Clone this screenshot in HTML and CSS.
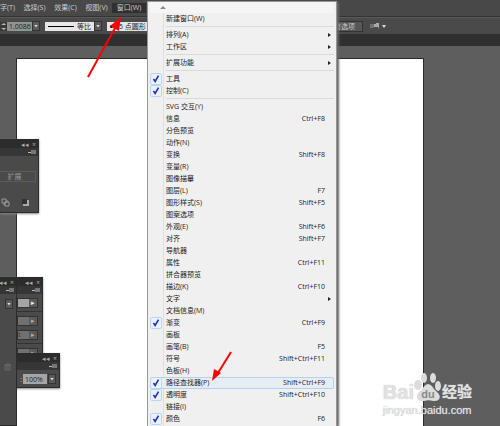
FILE: index.html
```html
<!DOCTYPE html>
<html lang="zh-CN">
<head>
  <meta charset="UTF-8">
  <title>窗口菜单</title>
  <link rel="stylesheet" href="styles.css">
</head>
<body>

  <!-- Menu bar -->
  <nav class="menu-bar">
    <button>字(T)</button>
    <button>选择(S)</button>
    <button>效果(C)</button>
    <button>视图(V)</button>
    <button class="open">窗口(W)</button>
  </nav>

  <!-- Control bar -->
  <div class="control-bar">
    <svg class="stepper" viewBox="0 0 7 9"><path d="M1 3h5l-2-2zM1 6h5l-2 2z" fill="#bbb"/></svg>
    <input class="stroke-width" type="text" value="1.0086" aria-label="描边粗细">
    <button class="drop" aria-label="粗细选项"></button>
    <button class="profile"><span class="line"></span>等比</button>
    <button class="drop" aria-label="等比选项"></button>
    <button class="brush"><span class="dot"></span>5 点圆形</button>
    <button class="prefs">首选项</button>
    <svg class="target-icon" viewBox="0 0 16 8">
      <path d="M0 3h4M0 5h4" stroke="#999"/>
      <path d="M4 2h2v3h-2zM6 1h3v6l-1-2h-2z" fill="#aaa"/>
      <path d="M12 3h4l-2 3z" fill="#ddd"/>
    </svg>
  </div>
  <div class="tab-strip"></div>

  <!-- Canvas with floating panels -->
  <main class="workspace">
    <div class="artboard"></div>

    <section class="panel pathfinder">
      <div class="panel-title"><span>◂◂</span><span>×</span></div>
      <div class="panel-tabs"><i class="panel-menu"></i></div>
      <button class="expand" disabled>扩展</button>
      <div class="shape-modes">
        <svg viewBox="0 0 9 9"><path d="M1 1h4v4h-4zM4 4h4v4h-4zM3 5v2h1M5 3h2v1" fill="none" stroke="#999"/></svg>
        <svg viewBox="0 0 9 9"><path d="M1 1h5v5h-5z" fill="#333"/><path d="M6 2h2v6h-6v-2h4z" fill="#aaa"/></svg>
      </div>
    </section>

    <section class="panel gradient">
      <div class="panel-title"><span>◂◂</span><span>×</span></div>
      <div class="panel-tabs"><i class="panel-menu"></i></div>
      <div class="field bright"><span></span><button aria-label="类型">▸</button></div>
      <hr>
      <div class="field"><span></span><button aria-label="角度">▸</button></div>
      <div class="field"><span>t</span><button aria-label="粗细">▸</button></div>
      <hr>
      <div class="field"><span></span><button aria-label="位置">▸</button></div>
    </section>

    <section class="panel opacity">
      <div class="panel-title"><span>◂◂</span><span>×</span></div>
      <div class="panel-tabs"><i class="panel-menu"></i></div>
      <div class="opacity-row">
        <label for="opacity">:</label>
        <input id="opacity" type="text" value="100%">
        <button class="drop" aria-label="不透明度选项"></button>
      </div>
    </section>

    <section class="panel swatches">
      <div class="panel-title"><span>◂◂</span><span>×</span></div>
      <div class="panel-tabs"><i class="panel-menu"></i></div>
      <div class="swatch-row"><button class="drop" aria-label="色板类型"></button></div>
      <svg class="trash" viewBox="0 0 7 8"><path d="M1 2h5v5h-5zM0 2h7M2 1h3M3 3v3M4 3v3" fill="none" stroke="#696969"/></svg>
    </section>
  </main>

  <!-- Window menu -->
  <div class="window-menu" id="window-menu"></div>

  <!-- Arrows -->
  <svg class="arrow arrow-top" viewBox="0 0 40 64">
    <path d="M2 62L29 13" stroke="#f00" stroke-width="2"/>
    <path d="M35 2L24 11L33 16Z" fill="#f00"/>
  </svg>
  <svg class="arrow arrow-item" viewBox="0 0 24 34">
    <path d="M21 2L8 23" stroke="#f00" stroke-width="2"/>
    <path d="M2 31L4 19L11 23Z" fill="#f00"/>
  </svg>

  <!-- Watermark -->
  <div class="watermark">
    <div class="brand">
      <span>Bai</span>
      <svg viewBox="0 0 28 30">
        <ellipse cx="4" cy="12" rx="4" ry="5"/>
        <ellipse cx="10" cy="5" rx="3" ry="5"/>
        <ellipse cx="19" cy="5" rx="3" ry="5"/>
        <ellipse cx="24" cy="13" rx="3" ry="5"/>
        <path d="M14 11C9 12 9 17 5 19C0 24 4 29 10 28C13 27 16 27 19 28C26 29 28 23 23 19C19 16 19 12 14 11Z"/>
        <text x="14" y="25">du</text>
      </svg>
      <span class="jingyan">经验</span>
    </div>
    <div class="site">jingyan.baidu.com</div>
  </div>

  <script src="menu.js"></script>
</body>
</html>
```
FILE: styles.css
```css
* {
  box-sizing: border-box;
}

body {
  margin: 0;
  height: 100vh;
  display: flex;
  flex-direction: column;
  position: relative;
  overflow: hidden;
  background-color: #5e5e5e;
  color: #ccc;
  font-family: "Open Sans", "Noto Sans CJK SC", sans-serif;
  font-size: 7px;
}

button, input {
  margin: 0;
  padding: 0;
  border: none;
  border-radius: 0;
  background: none;
  color: inherit;
  font: inherit;
}

/* Menu bar */
.menu-bar {
  flex: none;
  display: flex;
  height: 17px;
  padding: 3px 0;
  background-color: #484848;
  border-bottom: 1px solid #333;
}

.menu-bar button {
  width: 31px;
  line-height: 10px;
  white-space: nowrap;
}

.menu-bar button:first-child {
  width: 19px;
  padding-right: 5px;
  text-align: right;
}

.menu-bar .open {
  width: 34px;
  background-color: #303030;
}

/* Control bar */
.control-bar {
  flex: none;
  display: flex;
  align-items: center;
  height: 17px;
  background-color: #4a4a4a;
  border-top: 1px solid #5a5a5a;
}

.stepper {
  width: 7px;
  height: 9px;
  background-color: #3a3a3a;
}

.stroke-width {
  width: 25px;
  height: 9px;
  background-color: #929292;
  color: #222;
  padding-left: 2px;
}

.drop {
  display: flex;
  align-items: center;
  justify-content: center;
  width: 8px;
  height: 10px;
  border: 1px solid #333;
  background-color: #5a5a5a;
}

.drop::after {
  content: "";
  width: 4px;
  height: 3px;
  background-color: #ddd;
  clip-path: polygon(0 0, 100% 0, 50% 100%);
}

.profile, .brush {
  display: flex;
  align-items: center;
  gap: 3px;
  height: 9px;
  padding: 0 3px;
  background-color: #e6e6e6;
  color: #222;
}

.profile {
  width: 49px;
  margin-left: 5px;
}

.line {
  flex: 1;
  height: 1px;
  background-color: #000;
}

.brush {
  width: 54px;
  margin-left: 5px;
  gap: 6px;
}

.dot {
  width: 3px;
  height: 3px;
  border-radius: 50%;
  background-color: #000;
}

.prefs {
  width: 36px;
  height: 11px;
  margin-left: 166px;
  padding-right: 7px;
  line-height: 9px;
  text-align: right;
  border: 1px solid #333;
  background-color: #575757;
}

.target-icon {
  width: 16px;
  height: 8px;
  margin-left: 7px;
}

.tab-strip {
  flex: none;
  height: 12px;
  background-color: #303030;
}

/* Canvas */
.workspace {
  flex: 1;
  position: relative;
  display: flex;
  padding: 12px 76px 0 16px;
}

.artboard {
  flex: 1;
  background-color: #fff;
  border: 1px solid #2b2b2b;
  border-bottom: none;
}

/* Floating panels */
.panel {
  position: absolute;
  left: 0;
  background-color: #4a4a4a;
  border: 1px solid #2b2b2b;
  border-left: none;
  box-shadow: 0 1px 2px #888;
}

.panel-title, .panel-tabs {
  display: flex;
  justify-content: flex-end;
  align-items: center;
  gap: 3px;
  height: 8px;
  padding-right: 2px;
  background-color: #2c2c2c;
  color: #aaa;
}

.panel-tabs {
  background-color: #363636;
}

.panel-menu {
  width: 8px;
  height: 4px;
  background: linear-gradient(#777, #777) right / 5px 4px no-repeat, linear-gradient(#bbb, #bbb) left / 3px 1px no-repeat;
}

.pathfinder {
  top: 93px;
  width: 39px;
  height: 74px;
}

.expand {
  display: block;
  width: 36px;
  height: 11px;
  margin-top: 15px;
  padding-right: 6px;
  line-height: 9px;
  text-align: center;
  border: 1px solid #5a5a5a;
  border-left: none;
  color: #999;
}

.shape-modes {
  display: flex;
  justify-content: space-between;
  margin-top: 16px;
  padding: 0 8px 0 1px;
}

.shape-modes svg {
  width: 9px;
  height: 9px;
}

.gradient {
  top: 231px;
  width: 43px;
  height: 90px;
}

.gradient hr {
  margin: 3px 0;
  border: none;
  border-top: 1px solid #333;
}

.field {
  display: flex;
  height: 10px;
  margin: 4px 4px 0 17px;
  border: 1px solid #333;
  background-color: #707070;
  color: #333;
}

.field span {
  flex: 1;
  line-height: 8px;
}

.field button {
  width: 8px;
  line-height: 8px;
  background-color: #5a5a5a;
  color: #aaa;
}

.bright {
  background-color: #a5a5a5;
}

.bright button {
  color: #eee;
}

.opacity {
  top: 307px;
  width: 60px;
  height: 35px;
}

.opacity-row {
  display: flex;
  justify-content: flex-end;
  align-items: center;
  gap: 1px;
  padding: 4px 3px;
}

.opacity-row input {
  width: 24px;
  height: 10px;
  padding-left: 2px;
  background-color: #a5a5a5;
  color: #222;
}

.swatches {
  top: 231px;
  bottom: 0;
  width: 17px;
  box-shadow: none;
}

.swatch-row {
  display: flex;
  justify-content: flex-end;
  margin-top: 5px;
  padding-right: 3px;
}

.trash {
  display: block;
  width: 7px;
  height: 8px;
  margin: 54px 0 0 4px;
}

/* Window menu */
.window-menu {
  position: absolute;
  top: 1px;
  bottom: 0;
  left: 147px;
  width: 190px;
  padding: 0 2px;
  overflow: hidden;
  background: linear-gradient(to right, #f0f0f0 18px, #e0e0e0 18px, #e0e0e0 19px, #f0f0f0 19px);
  background-position: -3px 0;
  border: 1px solid #979797;
  border-bottom: none;
  box-shadow: 2px 1px 2px #666;
  color: #222;
}

.scroll-up {
  display: flex;
  align-items: center;
  width: 100%;
  height: 11px;
  background-color: #f5f5f5;
}

.scroll-up::after {
  content: "";
  width: 6px;
  height: 3px;
  margin-left: 10px;
  background-color: #888;
  clip-path: polygon(50% 0, 100% 100%, 0 100%);
}

.item {
  display: grid;
  grid-template-columns: 16px 1fr auto 9px;
  align-items: center;
  width: 100%;
  height: 12px;
  line-height: 12px;
  text-align: left;
  white-space: nowrap;
}

.item svg {
  display: block;
  width: 12px;
  height: 12px;
  border: 1px solid #b8d6fb;
  border-radius: 2px;
  background-color: #eaf2fb;
}

.item .more {
  display: block;
  width: 3px;
  height: 4px;
  margin-left: 3px;
  background-color: #222;
  clip-path: polygon(0 0, 100% 50%, 0 100%);
}

.item.active {
  border-radius: 2px;
  background-color: #e6edf5;
  box-shadow: inset 0 0 0 1px #b4d2f0;
}

.window-menu hr {
  margin: 1px 0 2px 16px;
  border: none;
  border-top: 1px solid #dadada;
}

/* Arrows */
.arrow {
  position: absolute;
}

.arrow-top {
  top: 15px;
  left: 86px;
  width: 40px;
  height: 64px;
}

.arrow-item {
  top: 350px;
  left: 210px;
  width: 24px;
  height: 34px;
}

/* Watermark */
.watermark {
  position: absolute;
  right: 28px;
  bottom: 9px;
  color: #e2e2e2;
  font-family: "Liberation Sans", "Noto Sans CJK SC", sans-serif;
  text-shadow: 0 0 1px #bbb;
}

.brand {
  display: flex;
  align-items: flex-end;
  font-size: 20px;
  font-weight: bold;
  line-height: 22px;
}

.brand svg {
  width: 28px;
  height: 30px;
  fill: #dcdcdc;
}

.brand text {
  fill: #888;
  font-size: 11px;
  text-anchor: middle;
  text-shadow: none;
}

.brand .jingyan {
  font-size: 15px;
}

.site {
  font-size: 11px;
  line-height: 14px;
}
```
FILE: menu.js
```javascript
const items = [
  ["新建窗口(W)"],
  null,
  ["排列(A)", "", "more"],
  ["工作区", "", "more"],
  null,
  ["扩展功能", "", "more"],
  null,
  ["工具", "", "checked"],
  ["控制(C)", "", "checked"],
  null,
  ["SVG 交互(Y)"],
  ["信息", "Ctrl+F8"],
  ["分色预览"],
  ["动作(N)"],
  ["变换", "Shift+F8"],
  ["变量(R)"],
  ["图像描摹"],
  ["图层(L)", "F7"],
  ["图形样式(S)", "Shift+F5"],
  ["图案选项"],
  ["外观(E)", "Shift+F6"],
  ["对齐", "Shift+F7"],
  ["导航器"],
  ["属性", "Ctrl+F11"],
  ["拼合器预览"],
  ["描边(K)", "Ctrl+F10"],
  ["文字", "", "more"],
  ["文档信息(M)"],
  ["渐变", "Ctrl+F9", "checked"],
  ["画板"],
  ["画笔(B)", "F5"],
  ["符号", "Shift+Ctrl+F11"],
  ["色板(H)"],
  ["路径查找器(P)", "Shift+Ctrl+F9", "checked active"],
  ["透明度", "Shift+Ctrl+F10", "checked"],
  ["链接(I)"],
  ["颜色", "F6", "checked"]
];

const check = '<svg viewBox="0 0 12 12"><path d="M3 6l2 3 4-7" fill="none" stroke="#2a35b5" stroke-width="2"/></svg>';

let html = '<button class="scroll-up" aria-label="向上滚动"></button>';

items.forEach(item => {
  if (!item) {
    html += "<hr>";
    return;
  }
  const [label, keys = "", state = ""] = item;
  html += `
    <button class="item ${state.includes("active") ? "active" : ""}">
      <span>${state.includes("checked") ? check : ""}</span>
      <span>${label}</span>
      <span>${keys}</span>
      <span>${state === "more" ? '<i class="more"></i>' : ""}</span>
    </button>`;
});

document.getElementById("window-menu").innerHTML = html;
```
